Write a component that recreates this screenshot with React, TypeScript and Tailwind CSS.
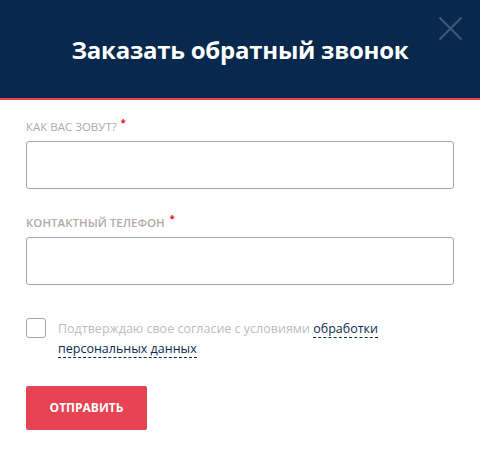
import React from "react";

export default function App() {
  return (
    <div className="w-[480px] h-[450px] bg-white" style={{ fontFamily: '"Open Sans", "Noto Sans", sans-serif' }}>
      <div className="relative h-[98px] bg-[#08294d] flex items-center justify-center border-b-2 border-[#e84352] box-content">
        <h1 className="text-white font-bold text-[24px] leading-none mt-[2px] tracking-[-0.25px]">Заказать обратный звонок</h1>
        <button className="absolute right-[17px] top-[16px] w-[25px] h-[25px] flex items-center justify-center">
          <svg width="25" height="25" viewBox="0 0 25 25">
            <path d="M1.5 1.5 L23.5 23.5 M23.5 1.5 L1.5 23.5" stroke="#3c5877" strokeWidth="2.2" />
          </svg>
        </button>
      </div>
      <div className="px-[26px] pt-[19px]">
        <div className="flex flex-col">
          <label className="text-[11.5px] uppercase text-[#b3aaa6] leading-[15px] h-[15px] flex">
            Как вас зовут?<span className="text-[#e00] ml-[4px] -mt-[4px] text-[9px] font-bold">*</span>
          </label>
          <input className="mt-[7px] h-[48px] w-[428px] border border-[#a6a6a6] rounded-[3px] outline-none" />
        </div>
        <div className="flex flex-col mt-[26px]">
          <label className="text-[11.5px] uppercase text-[#b3aaa6] leading-[15px] h-[15px] flex font-semibold">
            Контактный телефон<span className="text-[#e00] ml-[5px] -mt-[4px] text-[9px] font-bold">*</span>
          </label>
          <input className="mt-[7px] h-[48px] w-[428px] border border-[#a6a6a6] rounded-[3px] outline-none" />
        </div>
        <div className="flex mt-[33px]">
          <div className="w-[20px] h-[20px] border border-[#a6a6a6] rounded-[3px] shrink-0"></div>
          <p className="ml-[12px] text-[12.5px] leading-[20px] text-[#bcbcbc] mt-[1px]">
            Подтверждаю свое согласие с условиями{" "}
            <a className="text-[#0b2b50] border-b border-dashed border-[#0b2b50]">обработки</a>
            <br />
            <a className="text-[#0b2b50] border-b border-dashed border-[#0b2b50]">персональных данных</a>
          </p>
        </div>
        <button className="mt-[27px] w-[121px] h-[44px] bg-[#e84352] rounded-[2px] text-white text-[12px] font-bold uppercase">
          Отправить
        </button>
      </div>
    </div>
  );
}
